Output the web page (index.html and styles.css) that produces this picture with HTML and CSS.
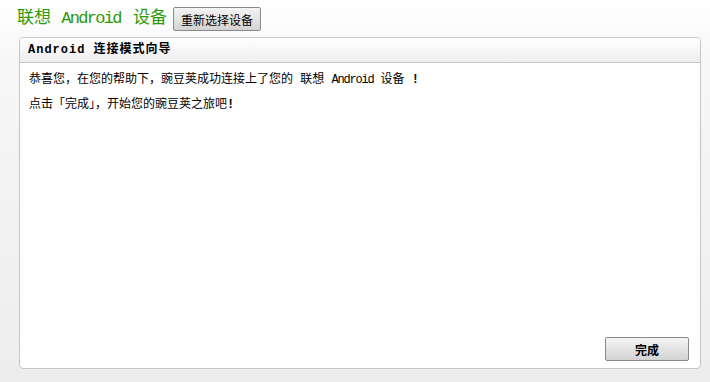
FILE: index.html
```html
<!DOCTYPE html>
<html lang="zh-CN">

<head>
    <meta charset="UTF-8">
    <title>联想 Android 设备</title>
    <link rel="stylesheet" href="styles.css">
</head>

<body>
    <div class="top-bar">
        <h1 class="device-name">联想 <span class="latin">Android</span> 设备</h1>
        <button class="btn reselect">重新选择设备</button>
    </div>

    <div class="panel">
        <div class="panel-header"><span class="latin">Android</span> 连接模式向导</div>
        <div class="panel-body">
            <p>恭喜您，在您的帮助下，豌豆荚成功连接上了您的 联想 <span class="latin">Android</span> 设备 <b>!</b></p>
            <p>点击「完成」，开始您的豌豆荚之旅吧<b>!</b></p>
        </div>
        <div class="panel-footer">
            <button class="btn finish">完成</button>
        </div>
    </div>
</body>

</html>
```

FILE: styles.css
```css
html,
body {
    height: 100%;
}

body {
    margin: 0;
    display: flex;
    flex-direction: column;
    background: linear-gradient(to bottom, #ffffff 0px, #f7f7f7 60px, #ededed 100%);
    font-family: "Liberation Mono", "Noto Sans CJK SC", monospace;
    font-size: 12px;
    color: #000;
}

.latin {
    letter-spacing: -1.2px;
}

.top-bar {
    display: flex;
    align-items: center;
    padding: 7px 0 0 17px;
    height: 24px;
}

.device-name {
    margin: 0 6px 0 0;
    font-size: 17px;
    font-weight: normal;
    color: #2c9a08;
    line-height: 24px;
}

.device-name .latin {
    letter-spacing: -1.7px;
    margin-right: 2px;
}

.btn {
    font-family: "Noto Sans CJK SC", sans-serif;
    font-size: 12px;
    color: #000;
    border: 1px solid #8a8a8a;
    border-radius: 2px;
    background: linear-gradient(to bottom, #f4f4f4 0%, #e4e4e4 50%, #d2d2d2 100%);
    cursor: pointer;
    padding: 0;
}

.reselect {
    width: 88px;
    height: 24px;
}

.panel {
    flex: 1;
    display: flex;
    flex-direction: column;
    margin: 6px 9px 13px 19px;
    border: 1px solid #c6c6c6;
    border-radius: 4px;
    background-color: #fff;
    overflow: hidden;
}

.panel-header {
    height: 24px;
    line-height: 24px;
    padding-left: 8px;
    border-bottom: 1px solid #c6c6c6;
    background: linear-gradient(to bottom, #ffffff 0%, #eeeeee 100%);
    font-weight: bold;
    font-size: 12px;
    letter-spacing: 1px;
}

.panel-header .latin {
    letter-spacing: 1px;
}

.panel-body {
    flex: 1;
    padding: 8px 9px 0;
}

.panel-body p {
    margin: 0 0 7px;
    line-height: 18px;
}

.panel-footer {
    display: flex;
    justify-content: flex-end;
    padding: 0 11px 7px 0;
}

.finish {
    width: 84px;
    height: 24px;
    font-weight: bold;
}
```
